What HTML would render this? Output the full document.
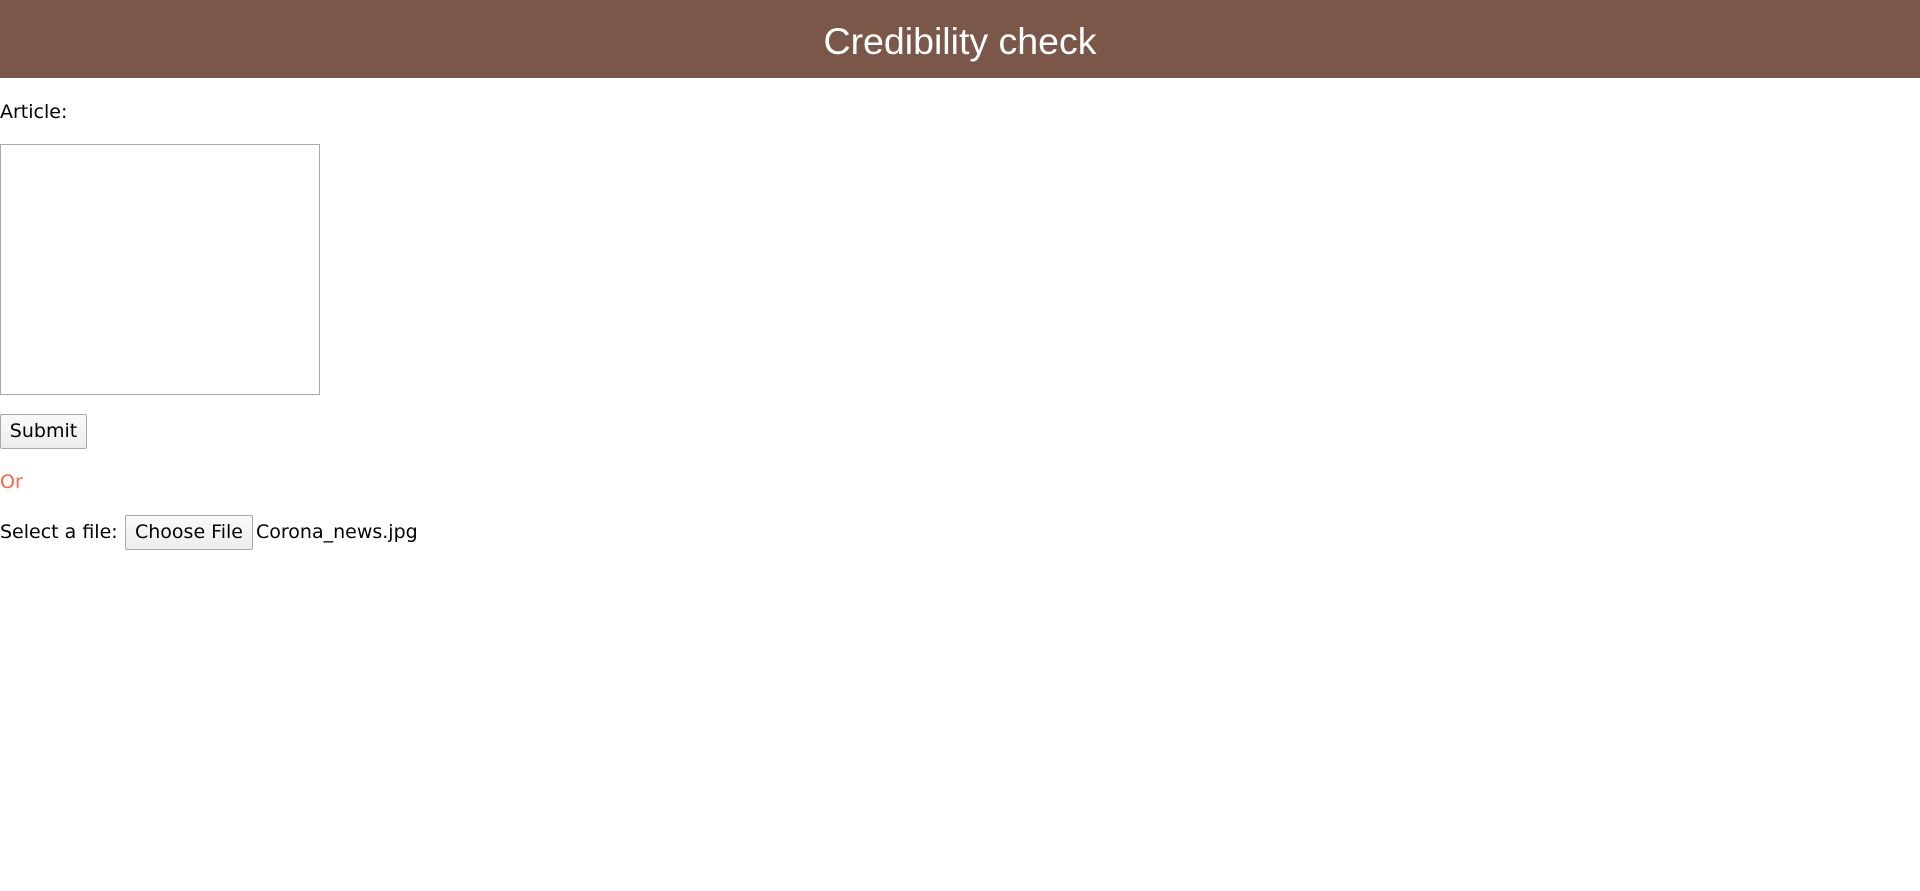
<!DOCTYPE html>
<html><head><meta charset="utf-8"><style>
html,body{margin:0;padding:0;background:#fff;width:1920px;height:891px;overflow:hidden}
body{font-family:"DejaVu Sans",Verdana,sans-serif;font-size:19px;color:#000;position:relative}
.hdr{position:absolute;left:0;top:0;width:1920px;height:78px;background:#7a5749;color:#fff;text-align:center;font-family:"Liberation Sans",sans-serif;font-size:37.5px;line-height:82px}
.a{position:absolute;left:0;white-space:nowrap}
.ta{position:absolute;left:0;top:144px;width:318px;height:249px;border:1px solid #a9a9a9}
.btn{position:absolute;box-sizing:border-box;border:1px solid #a9a9a9;border-radius:2px;background:linear-gradient(#fafafa,#ececec);font-size:19px;text-align:center;line-height:33px}
</style></head><body>
<div class="hdr">Credibility check</div>
<div class="a" style="top:101px">Article:</div>
<div class="ta"></div>
<div class="btn" style="left:0;top:414px;width:87px;height:35px">Submit</div>
<div class="a" style="top:471px;color:#ff6347">Or</div>
<div class="a" style="top:521px">Select a file:</div>
<div class="btn" style="left:125px;top:515px;width:128px;height:35px">Choose File</div>
<div class="a" style="left:256px;top:521px">Corona_news.jpg</div>
</body></html>
